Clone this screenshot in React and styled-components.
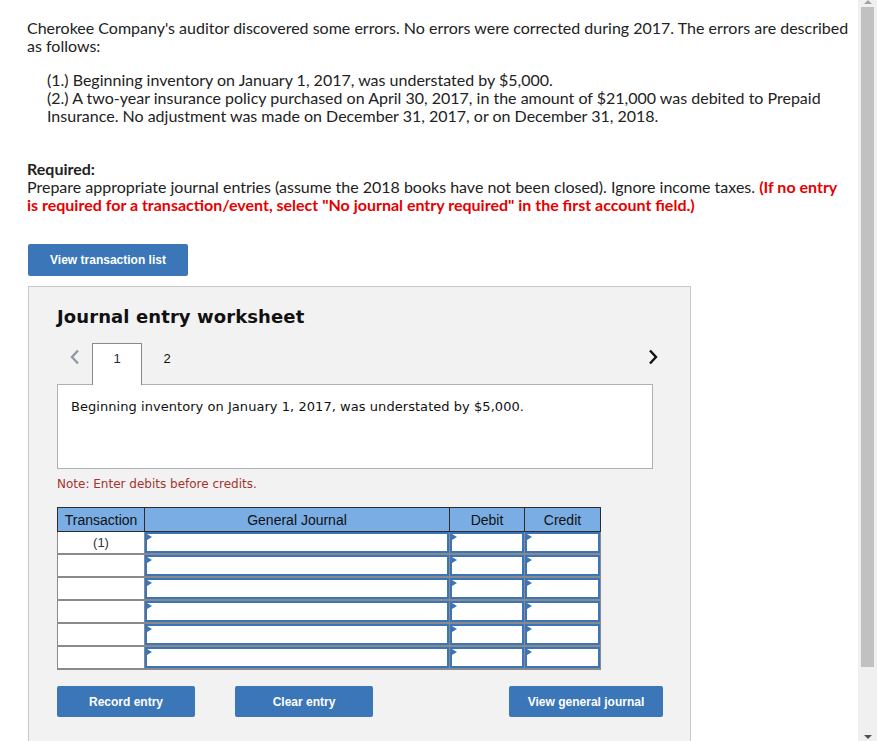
import React from 'react';
import styled, { createGlobalStyle } from 'styled-components';

const GlobalStyle = createGlobalStyle`
  html, body {
    margin: 0;
    padding: 0;
    background: #fff;
    overflow: hidden;
  }
`;

const Screen = styled.div`
  display: flex;
  width: 877px;
  height: 741px;
  overflow: hidden;
`;

const Page = styled.div`
  flex: 1;
  padding: 19px 8px 0 27px;
  font-family: Lato, "Liberation Sans", sans-serif;
  font-size: 16px;
  line-height: 18px;
  color: #222;
`;

const Para = styled.p`
  margin: 0;
  padding-left: ${(p) => (p.indent ? '20px' : '0')};
  margin-top: ${(p) => p.top || 0}px;
`;

const Red = styled.span`
  color: #e60000;
  font-weight: 700;
`;

const Bold = styled.div`
  font-weight: 700;
`;

const BlueButton = styled.button`
  display: inline-flex;
  align-items: center;
  justify-content: center;
  flex-shrink: 0;
  width: ${(p) => p.w}px;
  height: ${(p) => p.h || 31}px;
  padding: 0;
  border: none;
  border-radius: 2px;
  background: #3b76b9;
  color: #fff;
  font-family: "Liberation Sans", Arial, sans-serif;
  font-weight: 700;
  font-size: 12px;
  cursor: pointer;
`;

const TopButtonRow = styled.div`
  margin-top: 30px;
  padding-left: 1px;
`;

const Panel = styled.div`
  margin-top: 10px;
  margin-left: 1px;
  width: 663px;
  height: 470px;
  box-sizing: border-box;
  border: 1px solid #c8c8c8;
  border-bottom: none;
  background: #f2f2f2;
  padding: 19px 0 0 28px;
`;

const Title = styled.h2`
  margin: 0;
  font-family: "DejaVu Sans", Verdana, sans-serif;
  font-size: 18px;
  line-height: 22px;
  font-weight: 700;
  color: #111;
  letter-spacing: 0.1px;
`;

const TabRow = styled.div`
  display: flex;
  align-items: flex-end;
  margin-top: 15px;
  width: 606px;
  height: 41px;
  position: relative;
  z-index: 1;
`;

const Arrow = styled.div`
  display: flex;
  align-items: center;
  justify-content: center;
  align-self: flex-start;
  width: ${(p) => p.w}px;
  height: 28px;
`;

const Tab = styled.div`
  box-sizing: border-box;
  width: 50px;
  height: ${(p) => (p.active ? 42 : 41)}px;
  margin-bottom: ${(p) => (p.active ? -1 : 0)}px;
  display: flex;
  align-items: flex-start;
  justify-content: center;
  padding-top: 6px;
  background: ${(p) => (p.active ? '#fff' : 'transparent')};
  border: 1px solid ${(p) => (p.active ? '#8a8a8a' : 'transparent')};
  border-bottom: none;
  font-family: "Liberation Sans", Arial, sans-serif;
  font-size: 13px;
  color: ${(p) => (p.active ? '#1d2a44' : '#111')};
`;

const Spacer = styled.div`
  flex: 1;
`;

const Description = styled.div`
  box-sizing: border-box;
  width: 596px;
  height: 85px;
  background: #fff;
  border: 1px solid #b0b0b0;
  padding: 14px 0 0 13px;
  font-family: "DejaVu Sans", Verdana, sans-serif;
  font-size: 13px;
  line-height: 16px;
  letter-spacing: 0.05px;
  color: #111;
`;

const Note = styled.div`
  margin-top: 7px;
  font-family: "DejaVu Sans", Verdana, sans-serif;
  font-size: 12px;
  line-height: 16px;
  color: #a6322c;
`;

const Table = styled.table`
  margin-top: 15px;
  border-collapse: collapse;
  width: 543px;
  table-layout: fixed;
  font-family: "Liberation Sans", Arial, sans-serif;
  font-size: 14px;
`;

const Th = styled.th`
  height: 23px;
  padding: 0;
  background: #7aade4;
  border: 1px solid #2c2c2c;
  font-weight: 400;
  color: #111;
  text-align: center;
`;

const Td = styled.td`
  height: 20px;
  padding: 0;
  background: #fff;
  border: 1px solid #8a8a8a;
  border-width: 1px 1px 2px 1px;
  text-align: center;
  vertical-align: top;
  color: #333;
`;

const InputCell = styled.td`
  height: 20px;
  padding: 0;
  background: #fff;
  border: 1px solid #8a8a8a;
  border-width: 1px 1px 2px 1px;
`;

const InputBox = styled.div`
  box-sizing: border-box;
  height: 21px;
  border: 2px solid #3b74b8;
  position: relative;
  &::before {
    content: '';
    position: absolute;
    top: 0;
    left: 0;
    border-top: 3px solid transparent;
    border-bottom: 3px solid transparent;
    border-left: 5px solid #3b74b8;
  }
`;

const TxLabel = styled.div`
  padding-top: 2px;
  font-size: 13px;
`;

const BottomRow = styled.div`
  display: flex;
  margin-top: 16px;
  width: 606px;
`;

const Gap = styled.div`
  width: ${(p) => p.w}px;
`;

const Scrollbar = styled.div`
  width: 19px;
  height: 741px;
  background: #f0f0f0;
  display: flex;
  flex-direction: column;
  align-items: center;
  padding: 0 2px;
  box-sizing: border-box;
`;

const ScrollArrow = styled.div`
  width: 0;
  height: 0;
  border-left: 4px solid transparent;
  border-right: 4px solid transparent;
  ${(p) => (p.up ? 'border-bottom: 4px solid #a3a3a3;' : 'border-top: 4px solid #505050;')}
  margin: ${(p) => (p.up ? '0 0 3px' : 'auto 0 2px')};
`;

const Thumb = styled.div`
  width: 13px;
  height: 660px;
  background: #c1c1c1;
`;

const ChevronLeft = () => (
  <svg width="10" height="16" viewBox="0 0 10 16">
    <path d="M8 1.5 L2 8 L8 14.5" fill="none" stroke="#8f9aaa" strokeWidth="2.4" />
  </svg>
);

const ChevronRight = () => (
  <svg width="10" height="16" viewBox="0 0 10 16">
    <path d="M2 1.5 L8 8 L2 14.5" fill="none" stroke="#111" strokeWidth="2.4" />
  </svg>
);

const rows = ['(1)', '', '', '', '', ''];

export default function App() {
  return (
    <Screen>
      <GlobalStyle />
      <Page>
        <Para>
          Cherokee Company's auditor discovered some errors. No errors were corrected during 2017. The errors are described as follows:
        </Para>
        <Para indent top={16}>
          (1.) Beginning inventory on January 1, 2017, was understated by $5,000.
          <br />
          (2.) A two-year insurance policy purchased on April 30, 2017, in the amount of $21,000 was debited to Prepaid Insurance. No adjustment was made on December 31, 2017, or on December 31, 2018.
        </Para>
        <Para top={35}>
          <Bold>Required:</Bold>
          Prepare appropriate journal entries (assume the 2018 books have not been closed). Ignore income taxes.{' '}
          <Red>(If no entry is required for a transaction/event, select "No journal entry required" in the first account field.)</Red>
        </Para>
        <TopButtonRow>
          <BlueButton w={160} h={32}>View transaction list</BlueButton>
        </TopButtonRow>
        <Panel>
          <Title>Journal entry worksheet</Title>
          <TabRow>
            <Arrow w={35}><ChevronLeft /></Arrow>
            <Tab active>1</Tab>
            <Tab>2</Tab>
            <Spacer />
            <Arrow w={20}><ChevronRight /></Arrow>
          </TabRow>
          <Description>Beginning inventory on January 1, 2017, was understated by $5,000.</Description>
          <Note>Note: Enter debits before credits.</Note>
          <Table>
            <colgroup>
              <col style={{ width: 87 }} />
              <col style={{ width: 305 }} />
              <col style={{ width: 75 }} />
              <col style={{ width: 76 }} />
            </colgroup>
            <thead>
              <tr>
                <Th>Transaction</Th>
                <Th>General Journal</Th>
                <Th>Debit</Th>
                <Th>Credit</Th>
              </tr>
            </thead>
            <tbody>
              {rows.map((label, i) => (
                <tr key={i}>
                  <Td><TxLabel>{label}</TxLabel></Td>
                  <InputCell><InputBox /></InputCell>
                  <InputCell><InputBox /></InputCell>
                  <InputCell><InputBox /></InputCell>
                </tr>
              ))}
            </tbody>
          </Table>
          <BottomRow>
            <BlueButton w={138}>Record entry</BlueButton>
            <Gap w={40} />
            <BlueButton w={138}>Clear entry</BlueButton>
            <Spacer />
            <BlueButton w={154}>View general journal</BlueButton>
          </BottomRow>
        </Panel>
      </Page>
      <Scrollbar>
        <ScrollArrow up />
        <Thumb />
        <ScrollArrow />
      </Scrollbar>
    </Screen>
  );
}
